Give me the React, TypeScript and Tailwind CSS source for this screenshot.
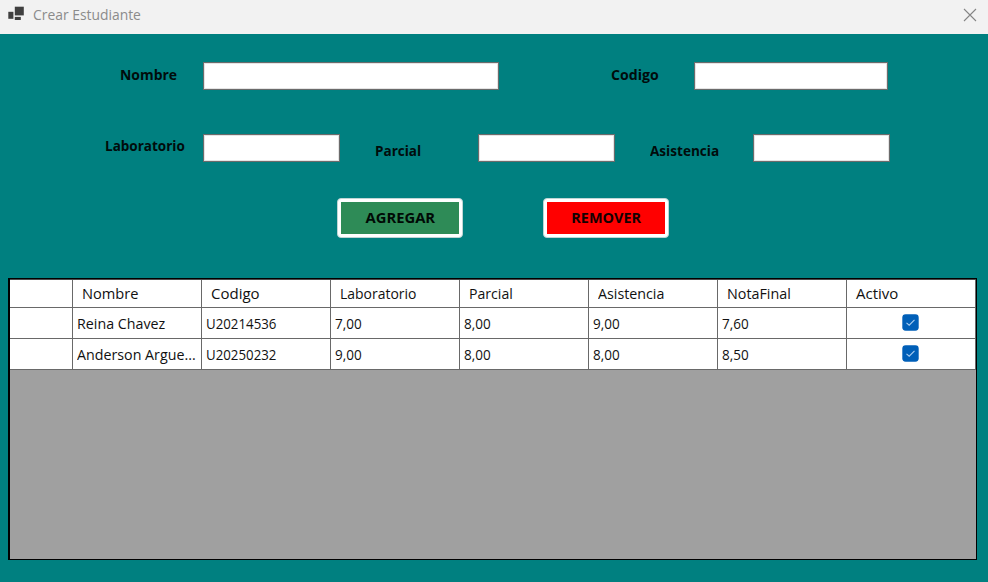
const rows = [
  { name: 'Reina Chavez', code: 'U20214536', marks: ['7,00', '8,00', '9,00', '7,60'] },
  { name: 'Anderson Argue...', code: 'U20250232', marks: ['9,00', '8,00', '8,00', '8,50'] },
];

const headers = [
  { text: 'Nombre', fit: 'scale-x-[0.975]' },
  { text: 'Codigo', fit: 'scale-x-100' },
  { text: 'Laboratorio', fit: 'scale-x-[0.93]' },
  { text: 'Parcial', fit: 'scale-x-[0.94]' },
  { text: 'Asistencia', fit: 'scale-x-[0.95]' },
  { text: 'NotaFinal', fit: 'scale-x-[0.955]' },
  { text: 'Activo', fit: 'scale-x-100' },
];

const cell = 'flex items-center border-r border-b border-[#696969] bg-white pl-1 whitespace-nowrap';

function Field({ className }: { className: string }) {
  return (
    <input
      className={`h-7 shrink-0 border border-[#6b6b6b] bg-white px-1 shadow-[inset_0_0_0_1px_#e4e4e4] outline-none ${className}`}
    />
  );
}

function Label({ text, fit, className }: { text: string; fit: string; className: string }) {
  return (
    <label className={`shrink-0 whitespace-nowrap text-[15px] leading-5 font-bold text-[#000c0c] ${className}`}>
      <span className={`inline-block origin-left ${fit}`}>{text}</span>
    </label>
  );
}

function Check() {
  return (
    <svg width="17" height="17" viewBox="0 0 17 17" fill="none">
      <rect x="0.3" y="0.3" width="16.4" height="16.4" rx="3.4" fill="#005fb8" />
      <path d="M4.5 8.8 7.2 11.2 12.5 5.9" stroke="#a9cdf0" strokeWidth="1.1" />
    </svg>
  );
}

export default function App() {
  return (
    <div className="flex h-[582px] w-[988px] flex-col overflow-hidden bg-[#008080] font-['Open_Sans','Noto_Sans',sans-serif]">
      <header className="flex h-[34px] shrink-0 items-start bg-[#f2f2f2] pl-2">
        <svg width="16" height="16" viewBox="0 0 16 16" className="mt-[6px]">
          <rect x="0.3" y="5.8" width="5.1" height="7" fill="#404040" />
          <rect x="6.8" y="0.7" width="9" height="8.7" fill="#404040" />
          <rect x="6.8" y="10.9" width="6" height="3.1" fill="#404040" />
        </svg>
        <span className="mt-1 ml-[9px] origin-left scale-x-[0.925] text-[15px] leading-5 text-[#8b8b8b]">Crear Estudiante</span>
        <svg width="14" height="14" viewBox="0 0 14 14" className="mt-2 mr-[11px] ml-auto">
          <path d="M1 1 13 13M13 1 1 13" stroke="#858585" strokeWidth="1.1" />
        </svg>
      </header>

      <div className="mt-7 flex h-7 shrink-0">
        <Label text="Nombre" fit="scale-x-[0.93]" className="mt-[2px] ml-[120px] w-[83px]" />
        <Field className="w-[296px]" />
        <Label text="Codigo" fit="scale-x-[0.94]" className="mt-[2px] ml-[112px] w-[83px]" />
        <Field className="w-[194px]" />
      </div>

      <div className="mt-[44px] flex h-[29px] shrink-0">
        <Label text="Laboratorio" fit="scale-x-[0.9]" className="mt-px ml-[105px] w-[98px]" />
        <Field className="w-[137px]" />
        <Label text="Parcial" fit="scale-x-[0.9]" className="mt-[6px] ml-[35px] w-[103px]" />
        <Field className="w-[137px]" />
        <Label text="Asistencia" fit="scale-x-[0.905]" className="mt-[6px] ml-[35px] w-[103px]" />
        <Field className="w-[137px]" />
      </div>

      <div className="mt-[35px] flex h-10 shrink-0 gap-20 pl-[337px]">
        <button className="h-10 w-[126px] rounded-[4px] border border-[#bfd5d5] bg-white p-[3px]">
          <span className="flex h-full items-center justify-center bg-[#2e8b57] pb-[2px] text-[15px] font-bold text-[#000a05]">
            <span className="scale-x-[0.985]">AGREGAR</span>
          </span>
        </button>
        <button className="h-10 w-[126px] rounded-[4px] border border-[#bfd5d5] bg-white p-[3px]">
          <span className="flex h-full items-center justify-center bg-[#ff0000] pb-[2px] text-[15px] font-bold text-[#140000]">
            <span className="scale-x-[0.965]">REMOVER</span>
          </span>
        </button>
      </div>

      <div className="mt-10 ml-2 h-[282px] w-[969px] shrink-0 border border-l-2 border-black bg-[#a0a0a0] text-[15px] text-[#111]">
        <div className="w-[966px] border-t border-[#4a4a4a]">
          <div className="grid h-7 grid-cols-[63px_repeat(7,129px)]">
            <div className="border-r border-b border-[#696969] bg-white" />
            {headers.map((h) => (
              <div key={h.text} className="flex items-center border-r border-b border-[#696969] bg-white pl-[9px]">
                <span className={`origin-left ${h.fit}`}>{h.text}</span>
              </div>
            ))}
          </div>
          {rows.map((row) => (
            <div key={row.code} className="grid h-[31px] grid-cols-[63px_repeat(7,129px)]">
              <div className="border-r border-b border-[#696969] bg-white" />
              <div className={cell}>
                <span className="origin-left scale-x-[0.95]">{row.name}</span>
              </div>
              <div className={cell}>
                <span className="origin-left scale-x-[0.885]">{row.code}</span>
              </div>
              {row.marks.map((mark, i) => (
                <div key={i} className={cell}>
                  <span className="origin-left scale-x-[0.9]">{mark}</span>
                </div>
              ))}
              <div className="flex items-start justify-center border-r border-b border-[#696969] bg-white pt-[6px] pr-[2px]">
                <Check />
              </div>
            </div>
          ))}
        </div>
      </div>
    </div>
  );
}
